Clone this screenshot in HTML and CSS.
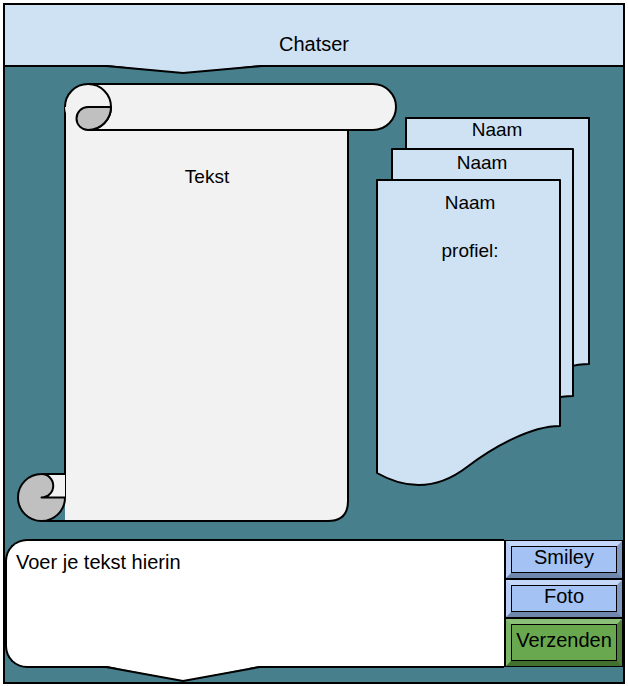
FILE: index.html
```html
<!DOCTYPE html>
<html lang="nl">
<head>
<meta charset="utf-8">
<title>Chatser</title>
<link rel="stylesheet" href="styles.css">
</head>
<body>
<div class="frame">
  <header class="header">
    <span class="header-title">Chatser</span>
    <svg class="header-pointer" width="160" height="10" viewBox="0 0 160 10">
      <polygon points="2,0 78,8 156,0" fill="#cfe2f3"/>
      <polyline points="1,1 78,8 157,1" fill="none" stroke="#000" stroke-width="2"/>
    </svg>
  </header>

  <main class="main">
    <svg class="canvas" width="618" height="472" viewBox="5 67 618 472">
      <g stroke="#000" stroke-width="2" stroke-linejoin="round">
        <!-- sheet body -->
        <path d="M65,110 V521 H328 Q348,521 348,501 V110 Z" fill="#f2f2f2" stroke="none"/>
        <path d="M65,107 V497.5" fill="none"/>
        <path d="M41.5,521 H328 Q348,521 348,501 V130" fill="none"/>
        <!-- top roll -->
        <path d="M88,84 H373 A23,23 0 0 1 373,130 H88 Z" fill="#f2f2f2" stroke="none"/>
        <path d="M88,84 H373 A23,23 0 0 1 373,130 H88" fill="none"/>
        <circle cx="88" cy="107" r="23" fill="#f2f2f2" stroke="none"/>
        <path d="M65,107 A23,23 0 1 1 88,130" fill="none"/>
        <path d="M88,107 H111 A23,23 0 0 1 88,130 A11.5,11.5 0 0 1 88,107 Z" fill="#c0c0c0"/>
        <!-- bottom curl -->
        <rect x="41.5" y="474" width="23.5" height="23.5" fill="#f2f2f2" stroke="none"/>
        <path d="M41.5,474 H65" fill="none"/>
        <path d="M41.5,474 A11.75,11.75 0 0 1 41.5,497.5 H65 A23.5,23.5 0 1 1 41.5,474 Z" fill="#c0c0c0"/>
        <!-- documents -->
        <path d="M406,118 H589 V364 C559,364 521,386 496,405 C466,428 436,428 406,411 Z" fill="#cfe2f3"/>
        <path d="M392,149 H573 V396 C543,396 505,418 480,437 C450,460 420,460 392,443 Z" fill="#cfe2f3"/>
        <path d="M377,180 H560 V426 C530,426 492,448 467,467 C437,490 407,490 377,473 Z" fill="#cfe2f3"/>
      </g>
      <g class="canvas-text">
        <text x="207" y="183">Tekst</text>
        <text x="497" y="136">Naam</text>
        <text x="482" y="169">Naam</text>
        <text x="470" y="209">Naam</text>
        <text x="470" y="257">profiel:</text>
      </g>
    </svg>
  </main>

  <section class="composer">
    <div class="input">
      <span class="input-placeholder">Voer je tekst hierin</span>
      <svg class="input-pointer" width="160" height="18" viewBox="0 0 160 18">
        <polygon points="2,0 78,15 154,0" fill="#fff"/>
        <polyline points="1,1 78,15 155,1" fill="none" stroke="#000" stroke-width="2"/>
      </svg>
    </div>
    <div class="actions">
      <div class="btn btn-blue"><div class="btn-face">Smiley</div></div>
      <div class="btn btn-blue"><div class="btn-face">Foto</div></div>
      <div class="btn btn-green btn-tall"><div class="btn-face">Verzenden</div></div>
    </div>
  </section>
  <div class="footer-space"></div>
</div>
</body>
</html>
```

FILE: styles.css
```css
html, body {
  margin: 0;
  padding: 0;
  background: #ffffff;
}

body {
  font-family: "Liberation Sans", Arial, sans-serif;
  color: #000;
}

.frame {
  box-sizing: border-box;
  width: 622px;
  height: 681px;
  margin: 3px 0 0 3px;
  border: 2px solid #000;
  background: #477f8c;
  display: flex;
  flex-direction: column;
}

.header {
  position: relative;
  box-sizing: border-box;
  height: 62px;
  flex: none;
  background: #cfe2f3;
  border-bottom: 2px solid #000;
  display: flex;
  justify-content: center;
  padding-top: 28px;
  z-index: 2;
}

.header-title {
  font-size: 20px;
  line-height: 23px;
  height: 23px;
}

.header-pointer {
  position: absolute;
  left: 100px;
  top: 60px;
  display: block;
}

.main {
  height: 472px;
  flex: none;
  position: relative;
}

.canvas {
  display: block;
}

.canvas-text text {
  font-family: "Liberation Sans", Arial, sans-serif;
  font-size: 19px;
  text-anchor: middle;
  fill: #000;
}

.composer {
  height: 129px;
  flex: none;
  display: flex;
}

.input {
  position: relative;
  flex: 1;
  box-sizing: border-box;
  background: #fff;
  border: 2px solid #000;
  border-right: none;
  border-radius: 22px 0 0 22px;
  padding: 10px 0 0 9px;
  z-index: 1;
}

.input-placeholder {
  font-size: 20px;
  line-height: 23px;
}

.input-pointer {
  position: absolute;
  left: 98px;
  top: 125px;
  display: block;
}

.actions {
  width: 119px;
  flex: none;
  margin-top: 1px;
  height: 127px;
  display: flex;
  flex-direction: column;
}

.btn {
  box-sizing: border-box;
  height: 39px;
  border: 1px solid #000;
  border-left-width: 2px;
  display: flex;
}

.btn-tall {
  height: 49px;
}

.btn-face {
  flex: 1;
  border: 5px solid;
  box-shadow: inset 0 0 0 1px #000;
  display: flex;
  align-items: center;
  justify-content: center;
  font-size: 20px;
  line-height: 20px;
  padding-bottom: 5px;
  box-sizing: border-box;
}

.btn-blue .btn-face {
  background: #a4c2f4;
  border-color: #c6d8f9 #7f97c2 #6f86ad #b6cdf6;
}

.btn-green .btn-face {
  background: #6aa84f;
  border-color: #8cbf77 #4f8039 #44702f #7db566;
}

.footer-space {
  flex: 1;
}
```
